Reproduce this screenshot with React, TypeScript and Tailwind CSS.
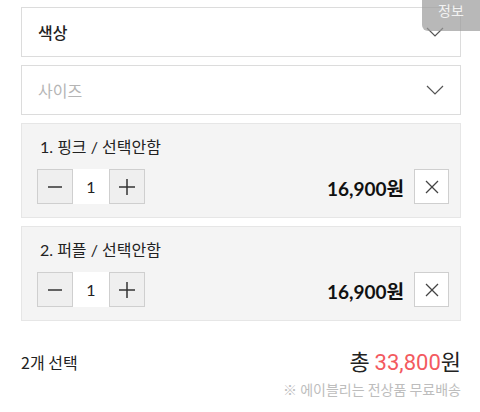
import React from "react";

const KR = "font-['Noto_Sans_CJK_KR',sans-serif]";

function Chevron() {
  return (
    <svg width="18" height="10" viewBox="0 0 18 10" fill="none" className="shrink-0">
      <polyline points="1,1 9,9 17,1" stroke="#555" strokeWidth="1.2" fill="none" />
    </svg>
  );
}

function Select({ label, placeholder }: { label: string; placeholder?: boolean }) {
  return (
    <div className="flex h-[50px] items-center justify-between border border-[#dcdcdc] bg-white pl-[16px] pr-[16px]">
      <span
        className={`${KR} text-[16px] ${placeholder ? "text-[#b5b5b5]" : "font-medium text-[#222]"}`}
      >
        {label}
      </span>
      <Chevron />
    </div>
  );
}

function OptionCard({ title, price }: { title: string; price: string }) {
  return (
    <div className="flex h-[95px] flex-col border border-[#e6e6e6] bg-[#f4f4f4] pl-[15px] pr-[11px] pt-[12px]">
      <div className="flex h-[22px] items-center pl-[3px] text-[16px] text-[#222] font-['Lato','Noto_Sans_CJK_KR',sans-serif]">
        {title}
      </div>
      <div className="mt-[11px] flex items-center justify-between">
        <div className="flex items-center">
          <button className="flex h-[35px] w-[36px] items-center justify-center border border-[#cfcfcf] bg-[#efefef]">
            <svg width="16" height="16" viewBox="0 0 16 16">
              <line x1="1" y1="8" x2="15" y2="8" stroke="#333" strokeWidth="1.5" />
            </svg>
          </button>
          <div className="flex h-[35px] w-[36px] items-center justify-center bg-white text-[16px] text-[#222] font-['Lato',sans-serif]">
            1
          </div>
          <button className="flex h-[35px] w-[36px] items-center justify-center border border-[#cfcfcf] bg-[#efefef]">
            <svg width="18" height="18" viewBox="0 0 18 18">
              <line x1="1" y1="9" x2="17" y2="9" stroke="#333" strokeWidth="1.5" />
              <line x1="9" y1="1" x2="9" y2="17" stroke="#333" strokeWidth="1.5" />
            </svg>
          </button>
        </div>
        <div className="flex items-center gap-[10px]">
          <span className="pt-[5px] text-[19px] font-bold text-[#111] font-['Lato','Noto_Sans_CJK_KR',sans-serif]">
            {price}
          </span>
          <button className="flex h-[35px] w-[35px] items-center justify-center border border-[#cfcfcf] bg-white">
            <svg width="14" height="14" viewBox="0 0 14 14">
              <line x1="1" y1="1" x2="13" y2="13" stroke="#444" strokeWidth="1.3" />
              <line x1="13" y1="1" x2="1" y2="13" stroke="#444" strokeWidth="1.3" />
            </svg>
          </button>
        </div>
      </div>
    </div>
  );
}

export default function App() {
  return (
    <div className="relative h-[412px] w-[480px] overflow-hidden bg-white">
      <div className="flex flex-col gap-[8px] pl-[21px] pr-[19px] pt-[7px]">
        <Select label="색상" />
        <Select label="사이즈" placeholder />
        <OptionCard title="1. 핑크 / 선택안함" price="16,900원" />
        <OptionCard title="2. 퍼플 / 선택안함" price="16,900원" />
      </div>
      <div className="mt-[24px] flex items-center justify-between pl-[21px] pr-[19px]">
        <span className={`${KR} text-[16px] text-[#222]`}>2개 선택</span>
        <span className={`${KR} text-[22px] leading-[30px] text-[#222]`}>
          총 <span className="text-[#f35a5f] font-['Roboto',sans-serif]">33,800</span>원
        </span>
      </div>
      <div className={`mt-[1px] flex justify-end pr-[19px] ${KR} text-[14px] text-[#bdbdbd]`}>
        ※ 에이블리는 전상품 무료배송
      </div>
      <div className={`absolute right-0 top-0 flex h-[31px] w-[58px] justify-center rounded-bl-[6px] bg-[#9a9a9a]/70 pt-[1px] ${KR} text-[14px] leading-[18px] text-[#f2f2f2]`}>
        정보
      </div>
    </div>
  );
}
